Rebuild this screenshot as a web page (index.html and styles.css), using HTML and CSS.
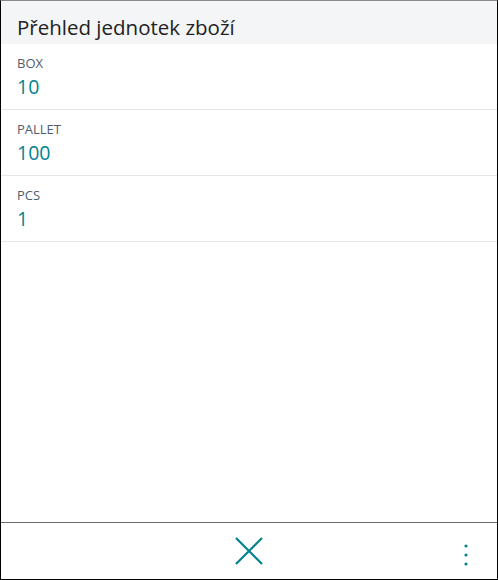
FILE: index.html
```html
<!DOCTYPE html>
<html lang="cs">
<head>
  <meta charset="UTF-8" />
  <meta name="viewport" content="width=device-width, initial-scale=1.0" />
  <title>Přehled jednotek zboží</title>
  <link rel="stylesheet" href="styles.css">
</head>
<body>
  <div class="panel">
    <header class="title-bar">
      <h1>Přehled jednotek zboží</h1>
    </header>
    <div class="list">
      <div class="row">
        <span class="row-label">BOX</span>
        <span class="row-value">10</span>
      </div>
      <div class="row">
        <span class="row-label">PALLET</span>
        <span class="row-value">100</span>
      </div>
      <div class="row">
        <span class="row-label">PCS</span>
        <span class="row-value">1</span>
      </div>
    </div>
    <footer class="action-bar">
      <button class="icon-btn close-btn" title="Zavřít">
        <svg width="28" height="28" viewBox="0 0 28 28">
          <path d="M1 1 L27 27 M27 1 L1 27" stroke="#00838f" stroke-width="2.2" fill="none" />
        </svg>
      </button>
      <button class="icon-btn more-btn" title="Další">
        <svg width="6" height="24" viewBox="0 0 6 24">
          <circle cx="3" cy="3" r="1.6" fill="#00838f" />
          <circle cx="3" cy="12" r="1.6" fill="#00838f" />
          <circle cx="3" cy="21" r="1.6" fill="#00838f" />
        </svg>
      </button>
    </footer>
  </div>
</body>
</html>
```

FILE: styles.css
```css
html, body {
  margin: 0;
  height: 100%;
}
body {
  font-family: "Open Sans", "Noto Sans", Arial, sans-serif;
  background: #fff;
  color: #212121;
}
.panel {
  box-sizing: border-box;
  height: 580px;
  border: 1px solid #000;
  border-top-color: #8a8a8a;
  display: flex;
  flex-direction: column;
}
.title-bar {
  background: #f4f5f7;
  height: 43px;
  padding: 0 16px;
  display: flex;
  align-items: center;
}
.title-bar h1 {
  margin: 0;
  font-size: 20.5px;
  font-weight: 400;
  color: #222;
  padding-top: 9px;
}
.list {
  flex: 1;
}
.row {
  height: 65px;
  border-bottom: 1px solid #e6e6e6;
  padding: 0 16px;
  display: flex;
  flex-direction: column;
}
.row-label {
  font-size: 13px;
  color: #505c6d;
  margin-top: 10px;
  line-height: 18px;
}
.row-value {
  font-size: 19.5px;
  color: #00838f;
  line-height: 26px;
  margin-top: 2px;
}
.action-bar {
  height: 56px;
  border-top: 1px solid #6e6e6e;
  position: relative;
  display: flex;
  justify-content: center;
  align-items: center;
}
.icon-btn {
  background: none;
  border: none;
  padding: 0;
  cursor: pointer;
  display: flex;
}
.more-btn {
  position: absolute;
  right: 28px;
  top: 20px;
}
```
